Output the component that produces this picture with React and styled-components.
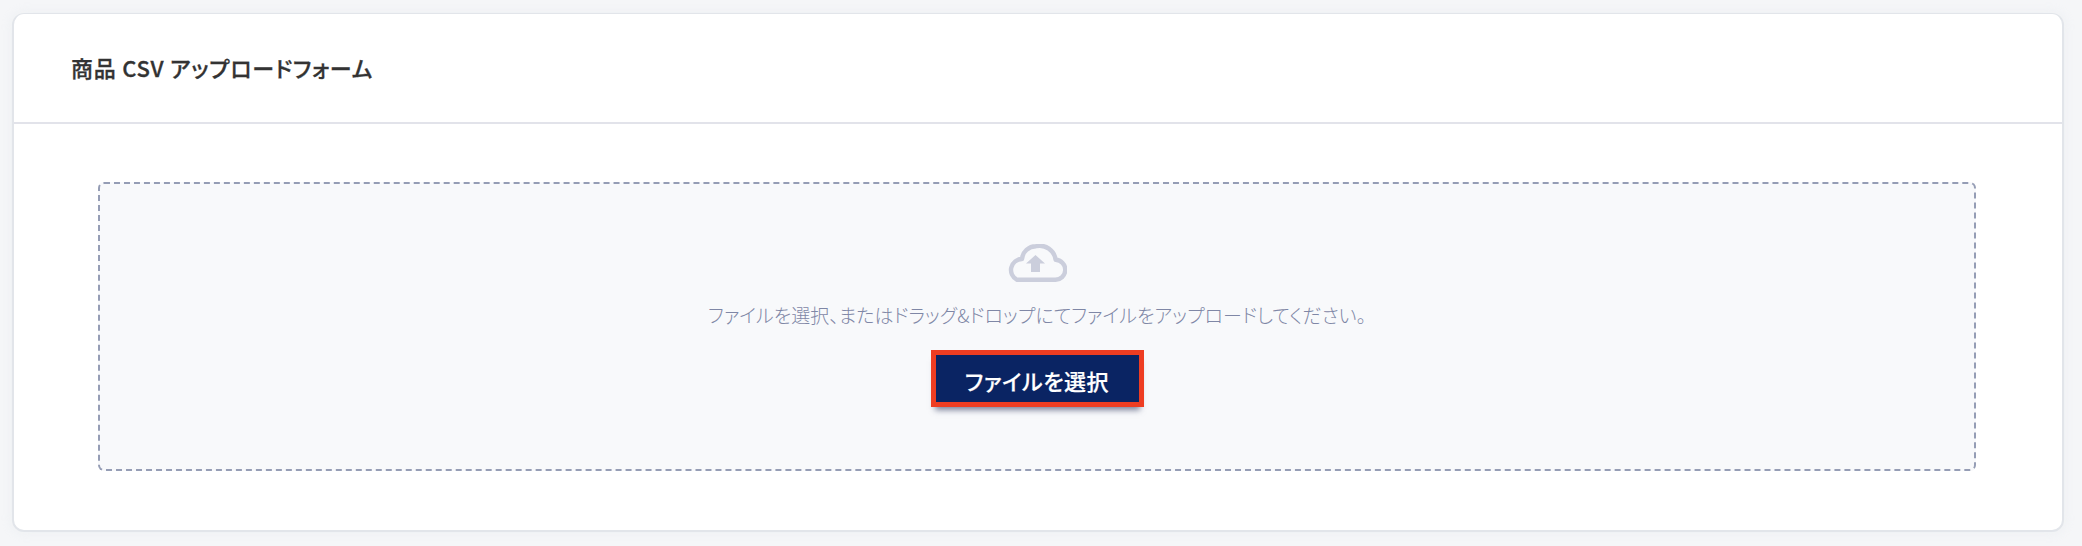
import React from 'react';
import styled, { createGlobalStyle } from 'styled-components';

const GlobalStyle = createGlobalStyle`
  html, body {
    margin: 0;
    padding: 0;
    background: #f5f6f8;
    font-family: "Noto Sans CJK JP", "Noto Sans", sans-serif;
    font-feature-settings: "palt";
  }
`;

const Page = styled.div`
  box-sizing: border-box;
  width: 2082px;
  height: 546px;
  padding: 13px 18px 14px 12px;
`;

const Card = styled.section`
  box-sizing: border-box;
  height: 519px;
  display: flex;
  flex-direction: column;
  background: #fff;
  border: 2px solid #e2e5ea;
  border-top-width: 1px;
  border-radius: 12px;
  box-shadow: 0 0 12px rgba(220, 224, 232, 0.3);
`;

const CardHeader = styled.header`
  box-sizing: border-box;
  height: 110px;
  flex: none;
  display: flex;
  align-items: center;
  padding-left: 57px;
  border-bottom: 2px solid #e2e3ea;
`;

const Title = styled.h2`
  margin: 0 0 2px;
  font-size: 22px;
  line-height: 30px;
  font-weight: 500;
  letter-spacing: 0.033em;
  color: #333;
  -webkit-text-stroke: 0.3px #333;
`;

const CardBody = styled.div`
  flex: 1;
  display: flex;
  padding: 58px 86px 59px 84px;
`;

const DropZone = styled.div`
  box-sizing: border-box;
  flex: 1;
  display: flex;
  flex-direction: column;
  align-items: center;
  padding-top: 60px;
  background: #f8f9fb;
  border: 2px dashed #959db5;
  border-radius: 6px;
`;

const CloudIcon = styled.svg`
  display: block;
  width: 62px;
  height: 38px;
  margin-left: -2px;
`;

const HelpText = styled.p`
  margin: 19px 0 0;
  font-size: 19px;
  line-height: 27px;
  font-weight: 300;
  color: #7f87a6;
`;

const SelectButton = styled.button`
  box-sizing: border-box;
  width: 213px;
  height: 57px;
  margin-top: 22px;
  padding: 3px 0 0;
  background: #0a2463;
  border: 5px solid #ee3d22;
  box-shadow: 0 7px 6px -4px rgba(40, 50, 90, 0.6);
  font-family: inherit;
  font-feature-settings: inherit;
  font-size: 22px;
  font-weight: 500;
  letter-spacing: 0.025em;
  color: #fff;
  -webkit-text-stroke: 0.2px #fff;
`;

const App = () => (
  <Page>
    <GlobalStyle />
    <Card>
      <CardHeader>
        <Title>商品 CSV アップロードフォーム</Title>
      </CardHeader>
      <CardBody>
        <DropZone>
          <CloudIcon viewBox="0 0 62 38" fill="none">
            <path
              d="M12 35.800H50a10 10 0 0 0 .6-20A16 16 0 0 0 31 2.200 14 14 0 0 0 17 15a11 11 0 0 0-5 20.800z"
              stroke="#cbcedc"
              strokeWidth="4.400"
              strokeLinejoin="round"
            />
            <path d="M30.500 11l9.500 8.500h-5V28h-9v-8.500h-5z" fill="#cbcedc" />
          </CloudIcon>
          <HelpText>ファイルを選択、またはドラッグ&ドロップにてファイルをアップロードしてください。</HelpText>
          <SelectButton type="button">ファイルを選択</SelectButton>
        </DropZone>
      </CardBody>
    </Card>
  </Page>
);

export default App;
